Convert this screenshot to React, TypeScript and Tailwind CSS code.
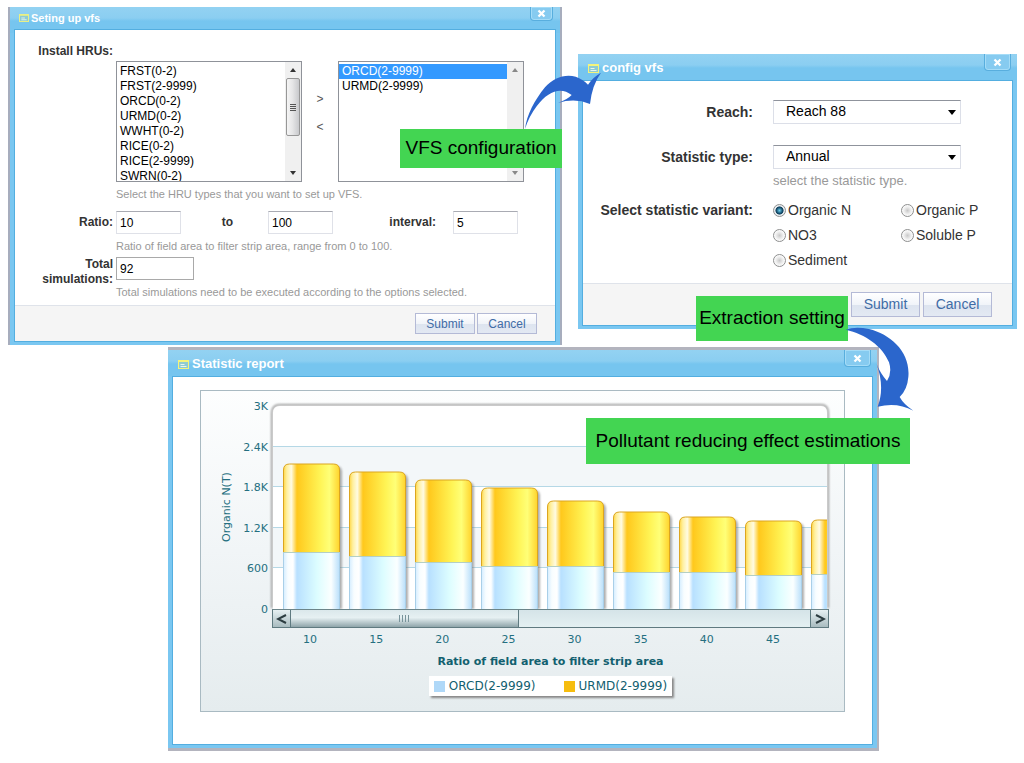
import { useState, type ReactNode } from "react";

const HRUS = [
  "FRST(0-2)",
  "FRST(2-9999)",
  "ORCD(0-2)",
  "URMD(0-2)",
  "WWHT(0-2)",
  "RICE(0-2)",
  "RICE(2-9999)",
  "SWRN(0-2)",
];

const BARS = [
  { x: 82, top: 72, split: 161 },
  { x: 148, top: 80, split: 165 },
  { x: 214, top: 88, split: 171 },
  { x: 280, top: 96, split: 175 },
  { x: 346, top: 109, split: 175 },
  { x: 412, top: 120, split: 181 },
  { x: 478, top: 125, split: 181 },
  { x: 544, top: 129, split: 184 },
  { x: 610, top: 128, split: 183 },
];

const TICKS = [
  { label: "3K", y: 15 },
  { label: "2.4K", y: 56 },
  { label: "1.8K", y: 96 },
  { label: "1.2K", y: 137 },
  { label: "600", y: 177 },
  { label: "0", y: 218 },
];

const VARIANTS = ["Organic N", "Organic P", "NO3", "Soluble P", "Sediment"];

export default function App() {
  return (
    <main className="min-h-screen overflow-hidden bg-white pt-[7px] pb-[10px] font-['Liberation_Sans',Arial,sans-serif] text-[#333]">
      <div className="grid grid-cols-[554fr_439fr] items-start gap-4 pr-[7px] pl-2">
        <SetupWindow />
        <ConfigWindow />
      </div>
      <ReportWindow />
    </main>
  );
}

function Window({
  title,
  size,
  frame,
  children,
  overlay,
}: {
  title: string;
  size: "sm" | "lg";
  frame: string;
  children: ReactNode;
  overlay?: ReactNode;
}) {
  const small = size === "sm";
  return (
    <section className={`relative ${frame}`}>
      <div className="bg-[#7ac7f1] bg-[linear-gradient(#93d2f2_0px,#8bcef1_11px,#76c5ef_14px,#76c5ef_26px)] bg-size-[100%_26px] bg-no-repeat px-[4px] pb-[3px]">
        <header className={`flex items-start justify-between ${small ? "h-[22px]" : "h-[26px]"}`}>
          <h2
            className={`flex h-full items-center font-bold text-white ${
              small ? "gap-[2px] pl-[5px] text-[11px]" : "gap-[3px] pt-[2px] pl-[6px] text-[13px]"
            }`}
          >
            <FormIcon small={small} />
            {title}
          </h2>
          <button
            type="button"
            aria-label={`Close ${title}`}
            className={`flex items-center justify-center rounded-b border border-t-0 border-[#58aede] bg-[#86cbf0] shadow-[inset_0_0_0_1px_#a5dcf7] ${
              small ? "mr-[3px] h-[14px] w-[23px]" : "mr-[2px] h-[17px] w-[27px]"
            }`}
          >
            <svg width="9" height="9" viewBox="0 0 9 9" aria-hidden>
              <path d="M1.5 1.5l6 6M7.5 1.5l-6 6" stroke="#fff" strokeWidth="2.3" />
            </svg>
          </button>
        </header>
        <div className="border border-[#53aee0] bg-white">{children}</div>
      </div>
      {overlay}
    </section>
  );
}

function FormIcon({ small }: { small: boolean }) {
  return (
    <svg width={small ? 10 : 11} height={small ? 8 : 9} viewBox="0 0 11 9" aria-hidden>
      <rect x="0.5" y="0.5" width="10" height="8" fill="#8fcbd2" stroke="#f4f47c" />
      <path d="M1 1.5h9" stroke="#f4f47c" />
      <path d="M2.5 4.5h4M2.5 6.5h6" stroke="#e8f6f0" />
    </svg>
  );
}

function Callout({ place, children }: { place: string; children: ReactNode }) {
  return (
    <div
      className={`absolute z-20 flex items-center justify-center bg-[#43d552] text-[19px] whitespace-nowrap text-black ${place}`}
    >
      {children}
    </div>
  );
}

function Footer({ small }: { small?: boolean }) {
  const button = `border border-[#b4bad6] bg-[linear-gradient(#fff,#f1f4f9_50%,#dde4ef_52%,#e3e9f3)] text-[#3f6ca6] ${
    small ? "h-[21px] w-[60px] text-[12px]" : "h-[25px] w-[69px] text-[14px]"
  }`;
  return (
    <footer
      className={`flex items-center justify-end border-t border-[#dfe3ea] bg-[#f5f5f5] ${
        small ? "h-[36px] gap-[2px] pr-[18px]" : "h-[42px] gap-[3px] pr-[20px]"
      }`}
    >
      <button type="button" className={button}>Submit</button>
      <button type="button" className={button}>Cancel</button>
    </footer>
  );
}

function ListBox({ label, items, initial = [], thumb }: { label: string; items: string[]; initial?: string[]; thumb?: boolean }) {
  const [picked, setPicked] = useState(initial);
  return (
    <div className="flex h-[121px] w-[186px] border border-[#8f9299] bg-white">
      <select
        multiple
        aria-label={label}
        value={picked}
        onChange={(e) => setPicked(Array.from(e.target.selectedOptions, (o) => o.value))}
        className="h-full min-w-0 flex-1 appearance-none overflow-hidden bg-white pt-[2px] text-[12px] text-black outline-none"
      >
        {items.map((item) => (
          <option
            key={item}
            className="h-[15px] min-h-0 p-0 pl-[3px] leading-[15px] checked:bg-[#3399ff] checked:bg-[linear-gradient(#3399ff,#3399ff)] checked:text-white"
          >
            {item}
          </option>
        ))}
      </select>
      <div className="flex w-[16px] flex-col items-center justify-between bg-[#f0f0f0]" aria-hidden>
        <Triangle up faded={!thumb} />
        {thumb && (
          <div className="mb-auto flex h-[58px] w-[14px] flex-col items-center justify-center gap-px rounded-[2px] border border-[#979797] bg-[linear-gradient(90deg,#f5f5f5,#e6e6e7_45%,#c8c9cc)]">
            <span className="h-px w-[6px] bg-[#555]" />
            <span className="h-px w-[6px] bg-[#555]" />
            <span className="h-px w-[6px] bg-[#555]" />
            <span className="h-px w-[6px] bg-[#555]" />
          </div>
        )}
        <Triangle faded={!thumb} />
      </div>
    </div>
  );
}

function Triangle({ up, faded }: { up?: boolean; faded?: boolean }) {
  return (
    <svg width="16" height="16" viewBox="0 0 16 16" className="shrink-0" aria-hidden>
      <path d={up ? "M5 10l3-4 3 4z" : "M5 6l3 4 3-4z"} fill={faded ? "#888" : "#333"} />
    </svg>
  );
}

function NumberBox({ id, value, className }: { id: string; value: string; className: string }) {
  return (
    <input
      id={id}
      type="text"
      defaultValue={value}
      className={`h-[23px] border bg-white pl-[3px] text-[12px] text-black outline-none ${className}`}
    />
  );
}

function SetupWindow() {
  const label = "shrink-0 text-right text-[12px] leading-[15px] font-bold";
  const hint = "text-[11px] leading-[16px] text-[#999]";
  const box = "w-[65px] border-[#dfe1e8] border-t-[#a9abb3]";
  return (
    <Window
      title="Seting up vfs"
      size="sm"
      frame="border-x-2 border-[#a7adbd]"
      overlay={
        <>
          <Callout place="-right-[2px] top-[122px] h-[39px] w-[162px]">VFS configuration</Callout>
          <svg className="absolute -right-[42px] top-[65px] z-20" width="78" height="58" viewBox="72 66 234 174" aria-hidden>
            <path
              d="M75 237C80 195 104 150 135 112C165 76 214 66 247 90Q257 96 264 104Q278 82 303 68Q276 105 270 162Q225 143 174 159Q203 148 215 135C183 110 145 122 110 169Q87 199 75 237Z"
              fill="#2b66cc"
            />
          </svg>
        </>
      }
    >
      <form onSubmit={(e) => e.preventDefault()}>
        <div className="pt-[14px] pb-[5px]">
          <p className={`${label} w-[98px]`}>Install HRUs:</p>
          <div className="mt-[2px] flex pl-[101px]">
            <ListBox label="Available HRUs" items={HRUS} thumb />
            <div className="flex w-[36px] flex-col items-center gap-[12px] pt-[30px] text-[12px] leading-[16px] text-[#555]">
              <button type="button" aria-label="Add">&gt;</button>
              <button type="button" aria-label="Remove">&lt;</button>
            </div>
            <ListBox label="Installed HRUs" items={["ORCD(2-9999)", "URMD(2-9999)"]} initial={["ORCD(2-9999)"]} />
          </div>
          <p className={`${hint} mt-[4px] ml-[101px]`}>Select the HRU types that you want to set up VFS.</p>

          <div className="mt-[9px] flex items-center">
            <label htmlFor="ratio-from" className={`${label} w-[98px]`}>Ratio:</label>
            <NumberBox id="ratio-from" value="10" className={`${box} ml-[3px]`} />
            <label htmlFor="ratio-to" className={`${label} w-[52px]`}>to</label>
            <NumberBox id="ratio-to" value="100" className={`${box} ml-[35px]`} />
            <label htmlFor="interval" className={`${label} w-[103px]`}>interval:</label>
            <NumberBox id="interval" value="5" className={`${box} ml-[17px]`} />
          </div>
          <p className={`${hint} mt-[4px] ml-[101px]`}>Ratio of field area to filter strip area, range from 0 to 100.</p>

          <div className="mt-[3px] flex items-start">
            <label htmlFor="total" className={`${label} w-[98px] pl-[20px]`}>Total simulations:</label>
            <div className="ml-[3px]">
              <NumberBox id="total" value="92" className="block w-[78px] border-[#a9a9a9]" />
              <p className={`${hint} mt-[4px]`}>
                Total simulations need to be executed according to the options selected.
              </p>
            </div>
          </div>
        </div>
        <Footer small />
      </form>
    </Window>
  );
}

function Dropdown({ id, options }: { id: string; options: string[] }) {
  return (
    <div className="relative w-[188px]">
      <select
        id={id}
        className="block h-[24px] w-full appearance-none border border-[#dcdfe8] border-t-[#8f939c] bg-white pb-[2px] pl-[12px] text-[14px] text-black outline-none"
      >
        {options.map((o) => (
          <option key={o}>{o}</option>
        ))}
      </select>
      <svg className="pointer-events-none absolute top-[10px] right-[5px]" width="8" height="5" viewBox="0 0 8 5" aria-hidden>
        <path d="M0 0h8L4 5z" fill="#000" />
      </svg>
    </div>
  );
}

function ConfigWindow() {
  const label = "w-[170px] shrink-0 text-right text-[14px] leading-[24px] font-bold";
  return (
    <Window
      title="config vfs"
      size="lg"
      frame="mt-[47px]"
      overlay={<Callout place="left-[118px] top-[242px] h-[45px] w-[152px]">Extraction setting</Callout>}
    >
      <form onSubmit={(e) => e.preventDefault()}>
        <div className="pt-[19px] pb-[10px]">
          <div className="flex gap-[20px]">
            <label htmlFor="reach" className={label}>Reach:</label>
            <Dropdown id="reach" options={["Reach 88"]} />
          </div>
          <div className="mt-[21px] flex gap-[20px]">
            <label htmlFor="stat-type" className={label}>Statistic type:</label>
            <div>
              <Dropdown id="stat-type" options={["Annual"]} />
              <p className="mt-[4px] text-[13px] leading-[16px] text-[#999]">select the statistic type.</p>
            </div>
          </div>
          <fieldset className="mt-[9px] flex gap-[20px]">
            <legend className={`${label} float-left`}>Select statistic variant:</legend>
            <div className="grid grid-cols-[128px_1fr]">
              {VARIANTS.map((v, i) => (
                <label key={v} className="flex h-[25px] items-center gap-[2px] text-[14px]">
                  <input
                    type="radio"
                    name="variant"
                    defaultChecked={i === 0}
                    className="size-[13px] appearance-none rounded-full border border-[#8e8f8f] bg-[radial-gradient(#c9c9c9_0%,#eee_45%,#fff_75%)] checked:bg-[radial-gradient(#6fd0f0_0%,#14506f_38%,#14405c_48%,#e8edf0_56%)]"
                  />
                  {v}
                </label>
              ))}
            </div>
          </fieldset>
        </div>
        <Footer />
      </form>
    </Window>
  );
}

function ReportWindow() {
  return (
    <div className="mt-[2px] mr-[145px] ml-[168px]">
      <Window
        title="Statistic report"
        size="lg"
        frame="border-y-[3px] border-r-2 border-[#b3b4be]"
        overlay={
          <>
            <Callout place="-right-[33px] top-[68px] h-[46px] w-[324px]">Pollutant reducing effect estimations</Callout>
            <svg className="absolute -top-[23px] -right-[38px] z-20" width="70" height="84" viewBox="494 82 210 252" aria-hidden>
              <path
                d="M496 90Q525 79 566 88C632 104 691 158 684 232Q681 270 658 292Q670 314 699 333Q650 306 592 321Q614 263 589 194Q601 223 620 244Q636 219 626 188C606 139 556 104 496 90Z"
                fill="#2b66cc"
              />
            </svg>
          </>
        }
      >
        <div className="px-[27px] pt-[13px] pb-[32px]">
          <Chart />
        </div>
      </Window>
    </div>
  );
}

function Chart() {
  return (
    <figure className="border border-[#a9bac2] bg-linear-to-b from-[#fdfefe] via-[#f1f5f7] to-[#e5ecee] pb-[15px] font-['DejaVu_Sans',Verdana,sans-serif] text-[11px] text-[#246f80]">
      <Plot />
      <div className="mr-[15px] ml-[71px]">
        <div className="flex h-[19px] border border-[#5f7a80] bg-linear-to-b from-[#d5e4e8] to-[#e4f0f2]">
          <ScrollButton label="Scroll left" d="M10 2L2 6l8 4" side="border-r" />
          <div className="flex w-[41%] items-center justify-center gap-[2px] border-r border-[#5f7a80] bg-[linear-gradient(#dbe8eb,#e6f0f2_45%,#8fa5aa)]">
            <span className="h-[7px] w-px bg-[#78939a]" />
            <span className="h-[7px] w-px bg-[#78939a]" />
            <span className="h-[7px] w-px bg-[#78939a]" />
            <span className="h-[7px] w-px bg-[#78939a]" />
          </div>
          <div className="flex-1" />
          <ScrollButton label="Scroll right" d="M2 2l8 4-8 4" side="border-l" />
        </div>
        <div className="mt-[4px] mr-[23px] ml-[5px] grid grid-cols-8 text-center leading-[16px]">
          {[10, 15, 20, 25, 30, 35, 40, 45].map((n) => (
            <span key={n}>{n}</span>
          ))}
        </div>
        <p className="mt-[6px] text-center leading-[16px] font-bold text-[#12606f]">
          Ratio of field area to filter strip area
        </p>
      </div>
      <figcaption className="mt-[6px] ml-[56px] flex justify-center text-[12px] text-[#12606f]">
        <div className="flex h-[20px] items-center gap-[28px] bg-white px-[5px] shadow-[2px_2px_2px_#888]">
          <span className="flex items-center gap-[4px]">
            <i className="size-[11px] bg-[#afd8f8]" />
            ORCD(2-9999)
          </span>
          <span className="flex items-center gap-[4px]">
            <i className="size-[11px] bg-[#f6bd0f]" />
            URMD(2-9999)
          </span>
        </div>
      </figcaption>
    </figure>
  );
}

function ScrollButton({ label, d, side }: { label: string; d: string; side: string }) {
  return (
    <button
      type="button"
      aria-label={label}
      className={`flex w-[18px] items-center justify-center border-[#5f7a80] bg-[linear-gradient(#e6f0f2,#a9bcc0)] ${side}`}
    >
      <svg width="12" height="12" viewBox="0 0 12 12" fill="none" aria-hidden>
        <path d={d} stroke="#2c3c40" strokeWidth="2" />
      </svg>
    </button>
  );
}

function Plot() {
  return (
    <svg viewBox="0 0 643 218" className="block w-full overflow-visible" role="img" aria-label="Organic N by ratio of field area">
      <defs>
        <linearGradient id="yellow">
          <stop offset="0" stopColor="#ffd84a" />
          <stop offset="0.06" stopColor="#fff0a0" />
          <stop offset="0.14" stopColor="#fffbe2" />
          <stop offset="0.24" stopColor="#ffc81c" />
          <stop offset="0.65" stopColor="#fff455" />
          <stop offset="0.82" stopColor="#ffff77" />
          <stop offset="1" stopColor="#ffd32c" />
        </linearGradient>
        <linearGradient id="blue">
          <stop offset="0" stopColor="#d5edff" />
          <stop offset="0.08" stopColor="#f8fdff" />
          <stop offset="0.17" stopColor="#fff" />
          <stop offset="0.24" stopColor="#b8e0ff" />
          <stop offset="0.6" stopColor="#dcfdff" />
          <stop offset="0.85" stopColor="#fbffff" />
          <stop offset="1" stopColor="#b9dffa" />
        </linearGradient>
        <clipPath id="plot">
          <path d="M71 0h555v218H71z" />
        </clipPath>
        <filter id="soft" x="-20%" y="-20%" width="140%" height="140%">
          <feGaussianBlur stdDeviation="1" />
        </filter>
      </defs>

      <path d="M71 217V22q0-8 8-8h541q7 0 7 8v195" fill="#fff" stroke="#999" strokeWidth="2" filter="url(#soft)" />
      <path d="M72 218V22q0-7 7-7h541q6 0 6 7v196z" fill="#fff" />
      <path d="M72 56h554v40H72zM72 137h554v40H72z" fill="#f3f7f9" />
      {TICKS.slice(1, 5).map((t) => (
        <path key={t.label} d={`M72 ${t.y - 0.5}h554`} stroke="#b5d8e6" />
      ))}

      <g clipPath="url(#plot)">
        {BARS.map((b) => (
          <g key={b.x}>
            <path d={`M${b.x + 4} 218V${b.top + 9}q0-6 6-6h43q6 0 6 6V218z`} fill="#777" opacity="0.6" filter="url(#soft)" />
            <rect x={b.x + 0.5} y={b.split} width="56" height={221 - b.split} fill="url(#blue)" stroke="#a9cfe8" />
            <path
              d={`M${b.x + 0.5} ${b.split}V${b.top + 7}q0-6 6-6h44q6 0 6 6V${b.split}`}
              fill="url(#yellow)"
              stroke="#dba520"
            />
            <path d={`M${b.x} ${b.split + 0.5}h57`} stroke="#b4cfc4" />
          </g>
        ))}
      </g>

      <g fill="#246f80" fontSize="11" textAnchor="end">
        {TICKS.map((t) => (
          <text key={t.label} x="67" y={t.y + 4}>{t.label}</text>
        ))}
        <text transform="translate(29 116) rotate(-90)" textAnchor="middle">Organic N(T)</text>
      </g>
    </svg>
  );
}
